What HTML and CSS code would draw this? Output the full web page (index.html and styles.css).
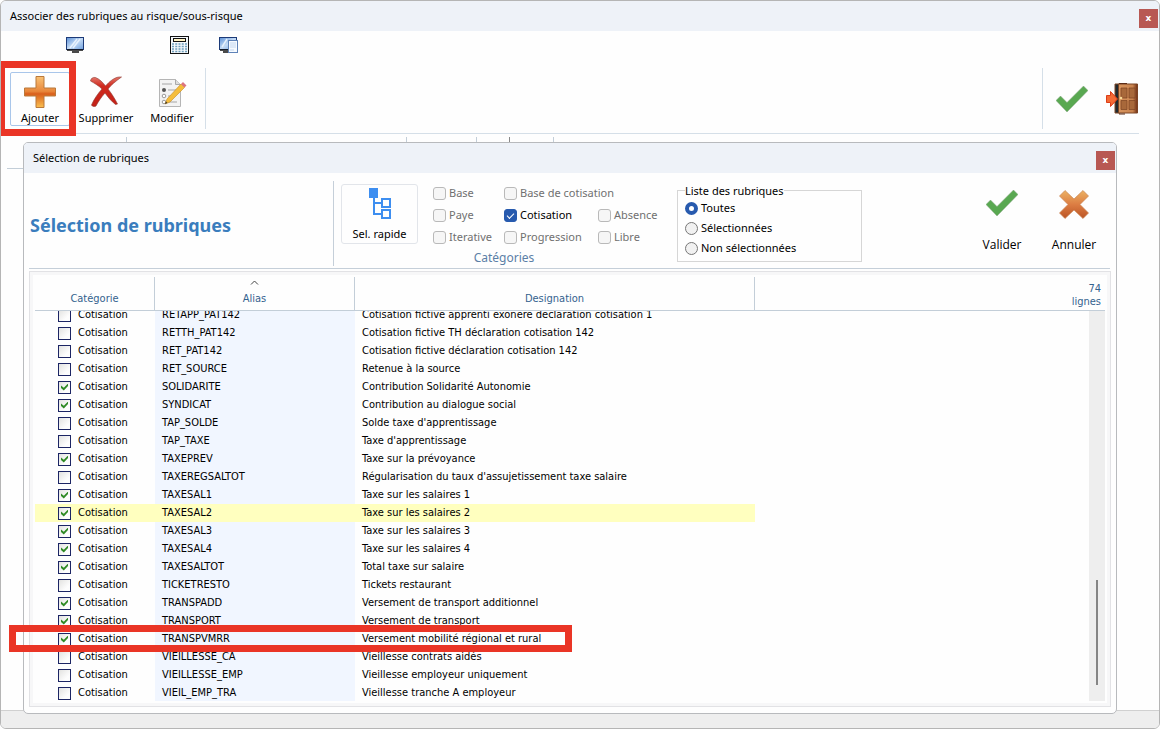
FILE: index.html
```html
<!DOCTYPE html>
<html lang="fr">
<head>
  <meta charset="UTF-8">
  <title>Associer des rubriques au risque/sous-risque</title>
  <link rel="stylesheet" href="styles.css">
</head>
<body>
  <svg class="defs" aria-hidden="true">
    <defs>
      <linearGradient id="orange" x1="0" y1="0" x2="0" y2="1">
        <stop offset="0" stop-color="#f9c274"/><stop offset=".48" stop-color="#e8863a"/><stop offset=".56" stop-color="#d95f1c"/><stop offset="1" stop-color="#fbc050"/>
      </linearGradient>
      <linearGradient id="copper" x1="0" y1="0" x2="0" y2="1">
        <stop offset="0" stop-color="#ecb263"/><stop offset=".5" stop-color="#dc7d43"/><stop offset="1" stop-color="#bb5425"/>
      </linearGradient>
      <linearGradient id="red" x1="0" y1="0" x2="0" y2="1">
        <stop offset="0" stop-color="#e4786c"/><stop offset=".3" stop-color="#cf2a1e"/><stop offset="1" stop-color="#c32017"/>
      </linearGradient>
      <linearGradient id="screen" x1="0" y1="0" x2="1" y2="1">
        <stop offset="0" stop-color="#5a8fd6"/><stop offset=".5" stop-color="#c4dbf5"/><stop offset="1" stop-color="#6f9fdd"/>
      </linearGradient>
      <linearGradient id="wood" x1="0" y1="0" x2="1" y2="0">
        <stop offset="0" stop-color="#d9965f"/><stop offset=".75" stop-color="#c9834e"/><stop offset="1" stop-color="#6d2c12"/>
      </linearGradient>
      <symbol id="check" viewBox="0 0 32 26">
        <path d="M0 14.500l4.500-4.500 6.500 6.500L27.500 0 32 4.500 11 26z" fill="#59a851" stroke="#8aa487" stroke-width=".5"/>
      </symbol>
    </defs>
  </svg>

  <main class="window">
    <header class="titlebar">
      <h1>Associer des rubriques au risque/sous-risque</h1>
      <button class="close" aria-label="Fermer">x</button>
    </header>

    <nav class="shortcuts">
      <button aria-label="Écran">
        <svg width="18" height="16" viewBox="0 0 18 16"><rect x=".5" y=".5" width="17" height="12" fill="url(#screen)" stroke="#1c3a78"/><path d="M4 11l7-9M7 11l7-9" stroke="#e7f1fc" stroke-width="1.500"/><path d="M1 13h16M6 15h7" stroke="#111" stroke-width="1.500"/></svg>
      </button>
      <button class="calc" aria-label="Calculatrice">
        <svg width="19" height="18" viewBox="0 0 19 18"><rect x=".5" y=".5" width="18" height="17" fill="#f4f8fb" stroke="#111"/><rect x="3.500" y="2.500" width="12" height="3" fill="#fff3c4" stroke="#111"/><path d="M2 8h15M2 10.500h15M2 13h15M2 15.500h15" stroke="#6f9fbd" stroke-width="1.500" stroke-dasharray="2 1.250"/></svg>
      </button>
      <button aria-label="Document écran">
        <svg width="20" height="16" viewBox="0 0 20 16"><rect x=".5" y=".5" width="17" height="12" fill="url(#screen)" stroke="#1c3a78"/><path d="M3 10l5-8" stroke="#e7f1fc" stroke-width="1.500"/><path d="M1 13h9M4 15h5" stroke="#111" stroke-width="1.500"/><rect x="9.500" y="3.500" width="9" height="12" fill="#f7fbff" stroke="#5f83b8"/><path d="M11 6h6M11 8h6M11 10h6M11 13h4" stroke="#c3d7f0"/></svg>
      </button>
    </nav>

    <div class="toolbar">
      <div class="tools">
        <button class="tool active">
          <svg width="32" height="32" viewBox="0 0 32 32"><path d="M12 .5h8V12h11.500v8H20v11.500h-8V20H.5v-8H12z" fill="url(#orange)" stroke="#b9783a"/></svg>
          Ajouter
        </button>
        <button class="tool">
          <svg width="32" height="32" viewBox="0 0 32 32"><path d="M.5 5C1 2 3 1 5.500 1.500 9.500 3 13 6.500 15.500 10 19 6 24 1.500 29 1h2.500C26 5 21 9 18 13c4 5 7 10 9.500 15l-2 .5C21 25 18 21 15 17c-4 4.500-7 9-9 13-1.500 1-4 .5-4.500-1C4 23 8 17.500 12 13 8.500 9.500 4 7 .5 5z" fill="url(#red)" stroke="#8d3a33" stroke-width=".6"/></svg>
          Supprimer
        </button>
        <button class="tool">
          <svg width="32" height="32" viewBox="0 0 32 32"><path d="M3.500 3.500h16l5 5v22h-21z" fill="#f3f3f3" stroke="#b5b5b5"/><path d="M19.500 3.500v5h5" fill="#ddd" stroke="#aaa"/><path d="M6 8h10M12 14h9M12 20h7M12 26h9" stroke="#a5a5a5"/><circle cx="8" cy="14" r="2" fill="#555"/><circle cx="8" cy="20" r="1.800" fill="#fff" stroke="#999"/><circle cx="8" cy="26" r="1.800" fill="#fff" stroke="#999"/><path d="M9 28l2-5L25 8l3.500 3.500L14 26z" fill="#f5bd3b" stroke="#c58a24" stroke-width=".6"/><path d="M25 8l2-2 3.500 3.500-2 2z" fill="#dc7480"/><path d="M9 28l1-2.500 1.500 1.500z" fill="#333"/></svg>
          Modifier
        </button>
      </div>
      <div class="actions">
        <button aria-label="Valider"><svg width="32" height="26"><use href="#check"/></svg></button>
        <button aria-label="Quitter">
          <svg width="33" height="32" viewBox="0 0 33 32"><path d="M9 1h5v29H9z" fill="#202a30" stroke="#7c4626"/><path d="M12.500 1h19v29h-19z" fill="url(#wood)" stroke="#7a4424"/><path d="M15 5h6v10h-6zM23 5h6v10h-6zM15 17.500h6v9h-6zM23 17.500h6v9h-6z" fill="#a8683a" stroke="#7b4422" stroke-width=".7"/><path d="M13 .5h8M13 31h6" stroke="#5b2c18"/><circle cx="15" cy="15" r="1.300" fill="#f7d694"/><path d="M.5 12.500h4v-4l7 7.500-7 7.500v-4h-4z" fill="#f46a34" stroke="#dc3c17"/></svg>
        </button>
      </div>
    </div>

    <div class="columns"><i></i><i></i><i></i><i></i><i></i></div>
    <footer class="statusbar"></footer>

    <section class="dialog" role="dialog" aria-labelledby="dialogTitle">
      <header class="titlebar">
        <h2 id="dialogTitle">Sélection de rubriques</h2>
        <button class="close" aria-label="Fermer">x</button>
      </header>

      <div class="ribbon">
        <div class="heading">Sélection de rubriques</div>
        <button class="quick">
          <svg width="24" height="32" viewBox="0 0 24 32"><path d="M1 0h9v10H1z" fill="#3d8ef0"/><path d="M6 9v17h7M6 15h7M14 11h8v8h-8zM14 22h8v8h-8z" fill="none" stroke="#3d8ef0" stroke-width="2"/></svg>
          Sel. rapide
        </button>
        <div class="categories">
          <div class="checks">
            <label><input type="checkbox">Base</label>
            <label class="wide"><input type="checkbox">Base de cotisation</label>
            <label><input type="checkbox">Paye</label>
            <label class="on"><input type="checkbox" checked>Cotisation</label>
            <label><input type="checkbox">Absence</label>
            <label><input type="checkbox">Iterative</label>
            <label><input type="checkbox">Progression</label>
            <label><input type="checkbox">Libre</label>
          </div>
          <div class="caption">Catégories</div>
        </div>
        <fieldset>
          <legend>Liste des rubriques</legend>
          <label><input type="radio" name="liste" checked>Toutes</label>
          <label><input type="radio" name="liste">Sélectionnées</label>
          <label><input type="radio" name="liste">Non sélectionnées</label>
        </fieldset>
        <div class="confirm">
          <button><svg width="32" height="26"><use href="#check"/></svg>Valider</button>
          <button><svg width="30" height="29" viewBox="0 0 30 29"><path d="M6 .5l9 8.500 9-8.500L29.500 6l-8.500 8.500 8.500 8.500-5.500 5.500-9-8.500-9 8.500L.5 23 9 14.500.5 6z" fill="url(#copper)" stroke="#c98554" stroke-width=".7"/></svg>Annuler</button>
        </div>
      </div>

      <div class="grid">
        <div class="scroll">
          <table>
            <thead>
              <tr><th class="cat">Catégorie</th><th class="alias"><svg width="9" height="5" viewBox="0 0 9 5"><path d="M1 4.500l3.500-3.500L8 4.500" fill="none" stroke="#444"/></svg>Alias</th><th class="label">Designation</th><th class="count">74<br>lignes</th></tr>
            </thead>
            <tbody id="rows"></tbody>
          </table>
        </div>
        <div class="bar"><div class="thumb"></div></div>
      </div>
    </section>

    <div class="mark mark-add"></div>
    <div class="mark mark-row"></div>
  </main>

  <script>
    const rubriques = [
      ["RETAPP_PAT142", "Cotisation fictive apprenti exonéré déclaration cotisation 1", 0],
      ["RETTH_PAT142", "Cotisation fictive TH déclaration cotisation 142", 0],
      ["RET_PAT142", "Cotisation fictive déclaration cotisation 142", 0],
      ["RET_SOURCE", "Retenue à la source", 0],
      ["SOLIDARITE", "Contribution Solidarité Autonomie", 1],
      ["SYNDICAT", "Contribution au dialogue social", 1],
      ["TAP_SOLDE", "Solde taxe d'apprentissage", 0],
      ["TAP_TAXE", "Taxe d'apprentissage", 0],
      ["TAXEPREV", "Taxe sur la prévoyance", 1],
      ["TAXEREGSALTOT", "Régularisation du taux d'assujetissement taxe salaire", 0],
      ["TAXESAL1", "Taxe sur les salaires 1", 1],
      ["TAXESAL2", "Taxe sur les salaires 2", 1],
      ["TAXESAL3", "Taxe sur les salaires 3", 1],
      ["TAXESAL4", "Taxe sur les salaires 4", 1],
      ["TAXESALTOT", "Total taxe sur salaire", 1],
      ["TICKETRESTO", "Tickets restaurant", 0],
      ["TRANSPADD", "Versement de transport additionnel", 1],
      ["TRANSPORT", "Versement de transport", 1],
      ["TRANSPVMRR", "Versement mobilité régional et rural", 1],
      ["VIEILLESSE_CA", "Vieillesse contrats aidés", 0],
      ["VIEILLESSE_EMP", "Vieillesse employeur uniquement", 0],
      ["VIEIL_EMP_TRA", "Vieillesse tranche A employeur", 0]
    ];
    document.getElementById("rows").innerHTML = rubriques.map(([alias, label, on]) =>
      `<tr${alias === "TAXESAL2" ? ' class="current"' : ""}>
        <td class="cat"><label><input type="checkbox"${on ? " checked" : ""}>Cotisation</label></td>
        <td class="alias">${alias}</td><td>${label}</td><td class="rest"></td>
      </tr>`).join("");
  </script>
</body>
</html>
```
FILE: styles.css
```css
* { box-sizing: border-box; }
body { margin: 0; font: 11px/16px "Noto Sans", "Open Sans", sans-serif; color: #000; background: #fefefe; }
button { padding: 0; border: 0; background: none; font: inherit; color: inherit; }
svg { display: block; }
h1, h2 { margin: 0; font-size: 11px; font-weight: normal; }
label { display: flex; align-items: center; }
.defs { position: absolute; width: 0; height: 0; }

/* main window */
.window { position: relative; display: flex; flex-direction: column; min-height: 100vh; border: 1px solid #b5b5b5; border-radius: 6px; overflow: hidden; }
.titlebar { display: flex; align-items: center; justify-content: space-between; height: 30px; padding: 0 1px 0 9px; background: #eef2f8; }
.close { width: 19px; height: 19px; margin-top: 4px; background: #b85853; color: #fff; font: bold 9px/16px "DejaVu Sans", sans-serif; }
.shortcuts { display: flex; align-items: center; gap: 30px; height: 28px; margin-bottom: 1px; padding-left: 65px; }
.calc { margin-left: 56px; }
.toolbar { display: flex; justify-content: space-between; height: 74px; margin-right: 20px; padding: 8px 0 4px; border-bottom: 1px solid #d5dfe8; }
.tools { display: flex; width: 205px; padding: 4px 0 3px 9px; border-right: 1px solid #d5dfe8; }
.tool { display: flex; flex-direction: column; align-items: center; justify-content: space-between; width: 66px; padding-top: 3px; border: 1px solid transparent; border-radius: 2px; line-height: 14px; }
.tool.active { width: 60px; margin-right: 3px; border-color: #a9c6ea; }
.actions { display: flex; align-items: center; gap: 18px; padding-left: 13px; border-left: 1px solid #d5dfe8; }

.columns { display: flex; flex: 1; padding-left: 6px; }
.columns i { width: 70px; height: 32px; margin-top: 3px; border: solid #c3ced8; border-width: 0 1px 1px 0; }
.columns i:nth-child(1) { width: 120px; }
.columns i:nth-child(2) { width: 280px; }
.columns i:nth-child(4) { width: 33px; border-color: #888; }
.columns i:nth-child(5) { width: 44px; }
.statusbar { height: 18px; border-top: 1px solid #d0d0d0; background: #eee; }

/* dialog */
.dialog { position: absolute; top: 141px; right: 42px; bottom: 14px; left: 22px; display: flex; flex-direction: column; border: 1px solid #b8babd; border-radius: 5px; background: #fefefe; overflow: hidden; }
.ribbon { display: flex; height: 96px; margin: 0 6px 0 5px; border-bottom: 1px solid #c5cfd9; }
.heading { width: 305px; margin: 8px 0 2px; padding-left: 1px; border-right: 1px solid #c5cfd9; color: #3a7dbd; font: bold 18px/88px "Noto Sans", sans-serif; }
.quick { display: flex; flex-direction: column; align-items: center; justify-content: space-between; width: 77px; height: 60px; margin: 11px 0 0 7px; padding: 3px 0 1px; border: 1px solid #e2e5ea; border-radius: 3px; }
.categories { width: 244px; margin: 9px 0 0 15px; color: #707070; }
.checks { display: grid; grid-template-columns: 71px 94px 1fr; grid-auto-rows: 22px; }
.wide { grid-column: span 2; }
.on { color: #000; }
.caption { width: 142px; color: #5b7fa6; font-size: 12px; line-height: 20px; text-align: center; }
.checks input { appearance: none; width: 13px; height: 13px; margin: 0 3px 0 0; border: 1px solid #b9b9b9; border-radius: 3px; background: #f6f6f6; }
.checks input:checked { border-color: #275aae; background: #275aae; }
.checks input:checked::before { content: ""; display: block; width: 6px; height: 3px; margin: 3px 0 0 2px; border: solid #fff; border-width: 0 0 1px 1px; transform: rotate(-45deg); }
fieldset { width: 185px; height: 79px; margin: 10px 0 0; padding: 0 0 0 7px; border: 1px solid #d6d6d6; }
legend { height: 15px; padding: 0; line-height: 15px; }
fieldset label { height: 20px; }
fieldset input { appearance: none; width: 13px; height: 13px; margin: 0 3px 0 0; border: 1px solid #777; border-radius: 50%; background: #f1f1f1; }
fieldset input:checked { border: 4px solid #275aae; background: #fff; }
.confirm { display: flex; margin-left: auto; font: 12px/16px "Open Sans", sans-serif; }
.confirm button { display: flex; flex-direction: column; align-items: center; justify-content: space-between; width: 72px; height: 63px; margin-top: 17px; }

/* list */
.grid { position: relative; flex: 1; min-height: 0; margin: 2px 5px 6px; padding: 5px; border: 1px solid #e2e2e5; box-shadow: inset 0 0 0 3px #f7f7f8; }
.scroll { height: 100%; overflow: hidden; }
table { width: 100%; margin-top: -5px; table-layout: fixed; border-spacing: 0; font: 11px/18px "DejaVu Sans Condensed", "DejaVu Sans", sans-serif; }
th { position: sticky; top: 0; z-index: 1; height: 34px; padding: 0 0 5px; border: solid #c3ced8; border-width: 0 1px 1px 0; background: #fefefe; color: #34628e; font-weight: normal; line-height: 13px; vertical-align: bottom; }
th.cat { width: 120px; }
th.alias { width: 200px; }
th.label { width: 400px; }
th.alias svg { margin: 0 auto 7px; }
th.count { padding: 0 4px 2px 0; border-right: 0; text-align: right; }
td { height: 18px; padding: 0 0 0 7px; white-space: nowrap; }
td.cat { padding-left: 23px; }
td.alias { background: #f1f6ff; }
.current td:not(.rest) { background: #ffffbf; }
td input { appearance: none; width: 13px; height: 13px; margin: 0 7px 0 0; border: 1px solid #1c2564; background: linear-gradient(135deg, #e2e2e0, #fdfdfd 70%); }
td input:checked::before { content: ""; display: block; width: 7px; height: 7px; margin: 2px; background: #2f8a25; clip-path: polygon(0 30%, 40% 60%, 100% 0, 100% 35%, 40% 100%, 0 65%); }
.bar { position: absolute; top: 39px; right: 5px; bottom: 5px; width: 16px; padding-top: 269px; background: #eee; }
.thumb { width: 2px; height: 105px; margin: 0 auto; background: #858585; }

/* highlights */
.mark { position: absolute; border: 7px solid #ea3526; pointer-events: none; }
.mark-add { top: 60px; left: -3px; width: 78px; height: 75px; }
.mark-row { top: 624px; left: 8px; width: 563px; height: 27px; }
```
